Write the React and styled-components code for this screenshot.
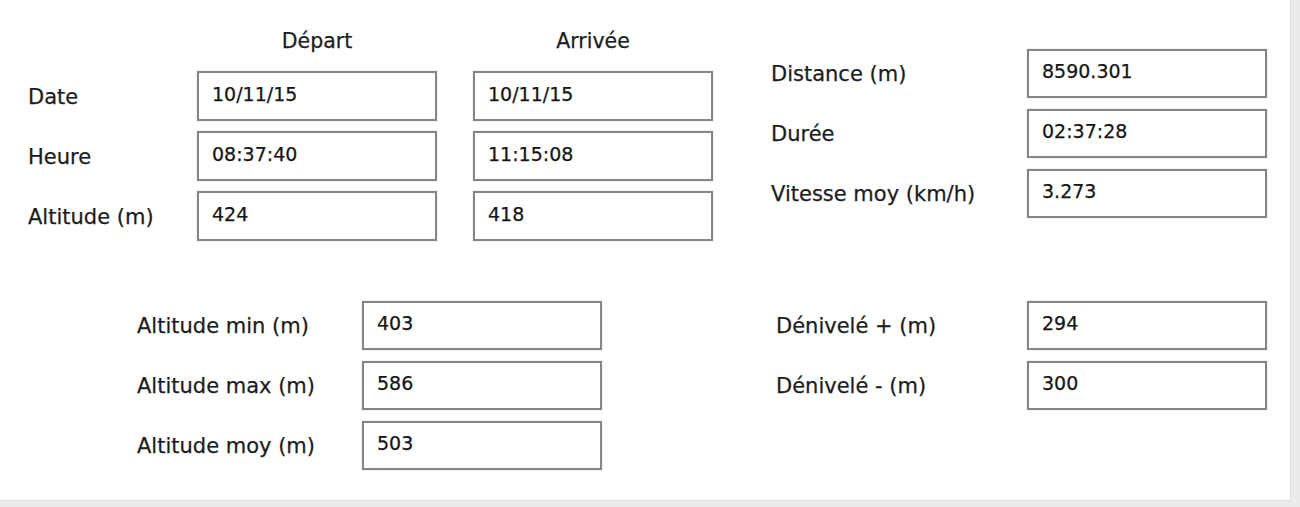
import React from "react";
import styled, { createGlobalStyle } from "styled-components";

const GlobalStyle = createGlobalStyle`
  html, body {
    margin: 0;
    padding: 0;
    background: #ffffff;
  }
  * {
    box-sizing: border-box;
  }
`;

const Panel = styled.div`
  width: 1300px;
  height: 507px;
  background: #ffffff;
  border-right: 9px solid #ebebeb;
  border-bottom: 6px solid #ebebeb;
  box-shadow: inset -1px -1px 0 #dcdcdc;
  font-family: "DejaVu Sans", Tahoma, Verdana, sans-serif;
  color: #1c1c1c;
  -webkit-text-stroke: 0.25px currentColor;
  display: flex;
  flex-direction: column;
`;

const TopRow = styled.div`
  display: flex;
  padding: 21px 0 0 28px;
  gap: 58px;
`;

const BottomRow = styled.div`
  display: flex;
  padding: 59px 0 0 137px;
  gap: 174px;
`;

const Grid = styled.div`
  display: grid;
  grid-template-columns: ${({ $label }) => $label}px repeat(${({ $cols }) => $cols || 1}, 240px);
  grid-auto-rows: 50px;
  column-gap: 36px;
  row-gap: 10px;
  margin-top: ${({ $top }) => $top || 0}px;
  align-items: center;
`;

const HeaderGrid = styled(Grid)`
  grid-template-rows: 40px;
`;

const ColumnHead = styled.div`
  text-align: center;
  align-self: center;
  font-size: 20.5px;
`;

const Label = styled.div`
  white-space: nowrap;
  padding-top: 2px;
  font-size: 21px;
  margin-right: -36px;
`;

const Field = styled.div`
  height: ${({ $h }) => $h || 50}px;
  border: 2px solid #858585;
  box-shadow: 0 0 1px #b0b0b0;
  padding: 0 0 4px 13px;
  display: flex;
  align-items: center;
  white-space: nowrap;
  background: #fff;
  color: #151515;
  font-size: 19px;
`;

const Spacer = styled.div``;

const departArrivee = [
  ["Date", "10/11/15", "10/11/15"],
  ["Heure", "08:37:40", "11:15:08"],
  ["Altitude (m)", "424", "418"],
];

const totals = [
  ["Distance (m)", "8590.301"],
  ["Durée", "02:37:28"],
  ["Vitesse moy (km/h)", "3.273"],
];

const altitudes = [
  ["Altitude min (m)", "403"],
  ["Altitude max (m)", "586"],
  ["Altitude moy (m)", "503"],
];

const denivele = [
  ["Dénivelé + (m)", "294"],
  ["Dénivelé - (m)", "300"],
];

function FieldRows({ rows, height }) {
  return rows.map((row) => (
    <React.Fragment key={row[0]}>
      <Label>{row[0]}</Label>
      {row.slice(1).map((v, i) => (
        <Field key={i} $h={height}>{v}</Field>
      ))}
    </React.Fragment>
  ));
}

export default function App() {
  return (
    <>
      <GlobalStyle />
      <Panel>
        <TopRow>
          <HeaderGrid $label={133} $cols={2}>
            <Spacer />
            <ColumnHead>Départ</ColumnHead>
            <ColumnHead>Arrivée</ColumnHead>
            <FieldRows rows={departArrivee} />
          </HeaderGrid>
          <Grid $label={220} $top={27}>
            <FieldRows rows={totals} height={49} />
          </Grid>
        </TopRow>
        <BottomRow>
          <Grid $label={189}>
            <FieldRows rows={altitudes} height={49} />
          </Grid>
          <Grid $label={215}>
            <FieldRows rows={denivele} height={49} />
          </Grid>
        </BottomRow>
      </Panel>
    </>
  );
}
